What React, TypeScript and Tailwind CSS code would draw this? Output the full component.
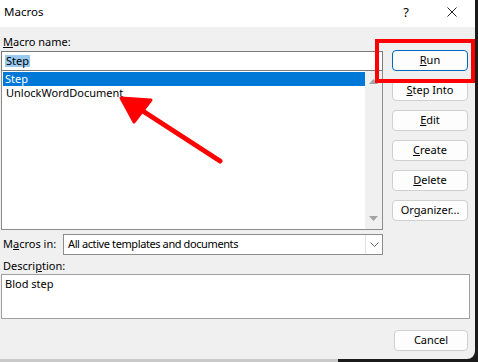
const font = { fontFamily: '"Noto Sans", "Liberation Sans", sans-serif' };

function Btn({ children, primary }: { children: React.ReactNode; primary?: boolean }) {
  return (
    <div
      className={
        "h-[21px] w-[76px] flex items-center justify-center rounded-[4px] bg-[#fdfdfd] text-[11px] text-black " +
        (primary ? "border border-[#0067c0]" : "border border-[#d0d0d0]")
      }
    >
      {children}
    </div>
  );
}

export default function App() {
  return (
    <div className="relative w-[478px] h-[362px] bg-[#1b1b1b] overflow-hidden" style={font}>
      {/* desktop strip under the dialog, bottom-left */}
      <div className="absolute left-0 bottom-0 w-[338px] h-[4px] bg-[#c9c9c9]" />

      <div className="relative w-[475px] h-[359px] bg-[#f0f0f0] rounded-br-[8px] flex flex-col text-black">
        {/* title bar */}
        <div className="h-[27px] bg-white flex items-center pl-[4px] pb-[3px] text-[11.5px] leading-none">
          <span>Macros</span>
          <span className="ml-auto mr-[38px] text-[13px]">?</span>
          <svg width="10" height="10" viewBox="0 0 10 10" className="mr-[18px]">
            <path d="M0.5 0.5 L9.5 9.5 M9.5 0.5 L0.5 9.5" stroke="#222" strokeWidth="1" />
          </svg>
        </div>

        <div className="flex pl-[1px]">
          {/* left column */}
          <div className="w-[382px] flex flex-col">
            <div className="mt-[7px] h-[16px] pl-[2px] text-[11px] leading-[16px]">
              <span className="underline">M</span>acro name:
            </div>
            <div className="mt-[1px] h-[20px] bg-white border border-[#7a7a7a] flex items-center pl-[3px]">
              <span className="bg-[#99c9ef] text-[11px] leading-[12px] px-[1px]">Step</span>
            </div>
            <div className="h-[159px] bg-white border border-[#8c8c8c] border-t-0 flex">
              <div className="flex-1 pt-[1px] pl-[1px] text-[11px] leading-[13px]">
                <div className="h-[14px] bg-[#0078d7] text-white pl-[2px]">Step</div>
                <div className="h-[14px] pl-[3px]">UnlockWordDocument</div>
              </div>
              <div className="w-[17px] bg-[#f0f0f0] flex flex-col items-center justify-between py-[8px]">
                <svg width="9" height="5" viewBox="0 0 9 5">
                  <path d="M0 5 L4.5 0 L9 5 Z" fill="#a3a3a3" />
                </svg>
                <svg width="9" height="5" viewBox="0 0 9 5">
                  <path d="M0 0 L9 0 L4.5 5 Z" fill="#a3a3a3" />
                </svg>
              </div>
            </div>
            <div className="mt-[4px] flex items-center">
              <div className="w-[62px] pl-[2px] text-[11px]">
                M<span className="underline">a</span>cros in:
              </div>
              <div className="flex-1 h-[21px] bg-white border border-[#8c8c8c] flex items-center">
                <span className="flex-1 pl-[4px] text-[11px] tracking-[-0.4px]">All active templates and documents</span>
                <div className="w-[17px] h-full border-l border-[#e0e0e0] flex items-center justify-center">
                  <svg width="9" height="5" viewBox="0 0 9 5">
                    <path d="M0.5 0.5 L4.5 4.5 L8.5 0.5" stroke="#666" strokeWidth="1" fill="none" />
                  </svg>
                </div>
              </div>
            </div>
          </div>

          {/* right buttons */}
          <div className="ml-[9px] mt-[23px] flex flex-col gap-[9px]">
            <Btn primary>
              <span className="underline">R</span>un
            </Btn>
            <Btn>
              <span className="underline">S</span>tep Into
            </Btn>
            <Btn>
              <span className="underline">E</span>dit
            </Btn>
            <Btn>
              <span className="underline">C</span>reate
            </Btn>
            <Btn>
              <span className="underline">D</span>elete
            </Btn>
            <Btn>
              Or<span className="underline">g</span>anizer...
            </Btn>
          </div>
        </div>

        <div className="mt-[3px] h-[16px] pl-[3px] text-[11px] leading-[16px]">
          Descri<span className="underline">p</span>tion:
        </div>
        <div className="ml-[1px] w-[469px] h-[45px] bg-white border border-[#a0a0a0] pl-[3px] pt-[1px] text-[11px] leading-[16px]">
          Blod step
        </div>
        <div className="mt-[11px] flex justify-end pr-[7px]">
          <div className="h-[21px] w-[74px] flex items-center justify-center rounded-[4px] bg-[#fdfdfd] border border-[#d0d0d0] text-[11px]">
            Cancel
          </div>
        </div>

        {/* annotation: red box round Run */}
        <div className="absolute left-[375px] top-[39px] w-[100px] h-[44px] border-[4px] border-[#ff0000]" />

        {/* annotation: red arrow */}
        <svg className="absolute left-0 top-0" width="475" height="359" viewBox="0 0 475 359">
          <line x1="220" y1="161" x2="132" y2="104" stroke="#ff0000" strokeWidth="5" strokeLinecap="round" />
          <path
            d="M121 98 L151 100 L134 122 Z"
            fill="#ff0000"
            stroke="#ff0000"
            strokeWidth="3"
            strokeLinejoin="round"
          />
        </svg>
      </div>
    </div>
  );
}
